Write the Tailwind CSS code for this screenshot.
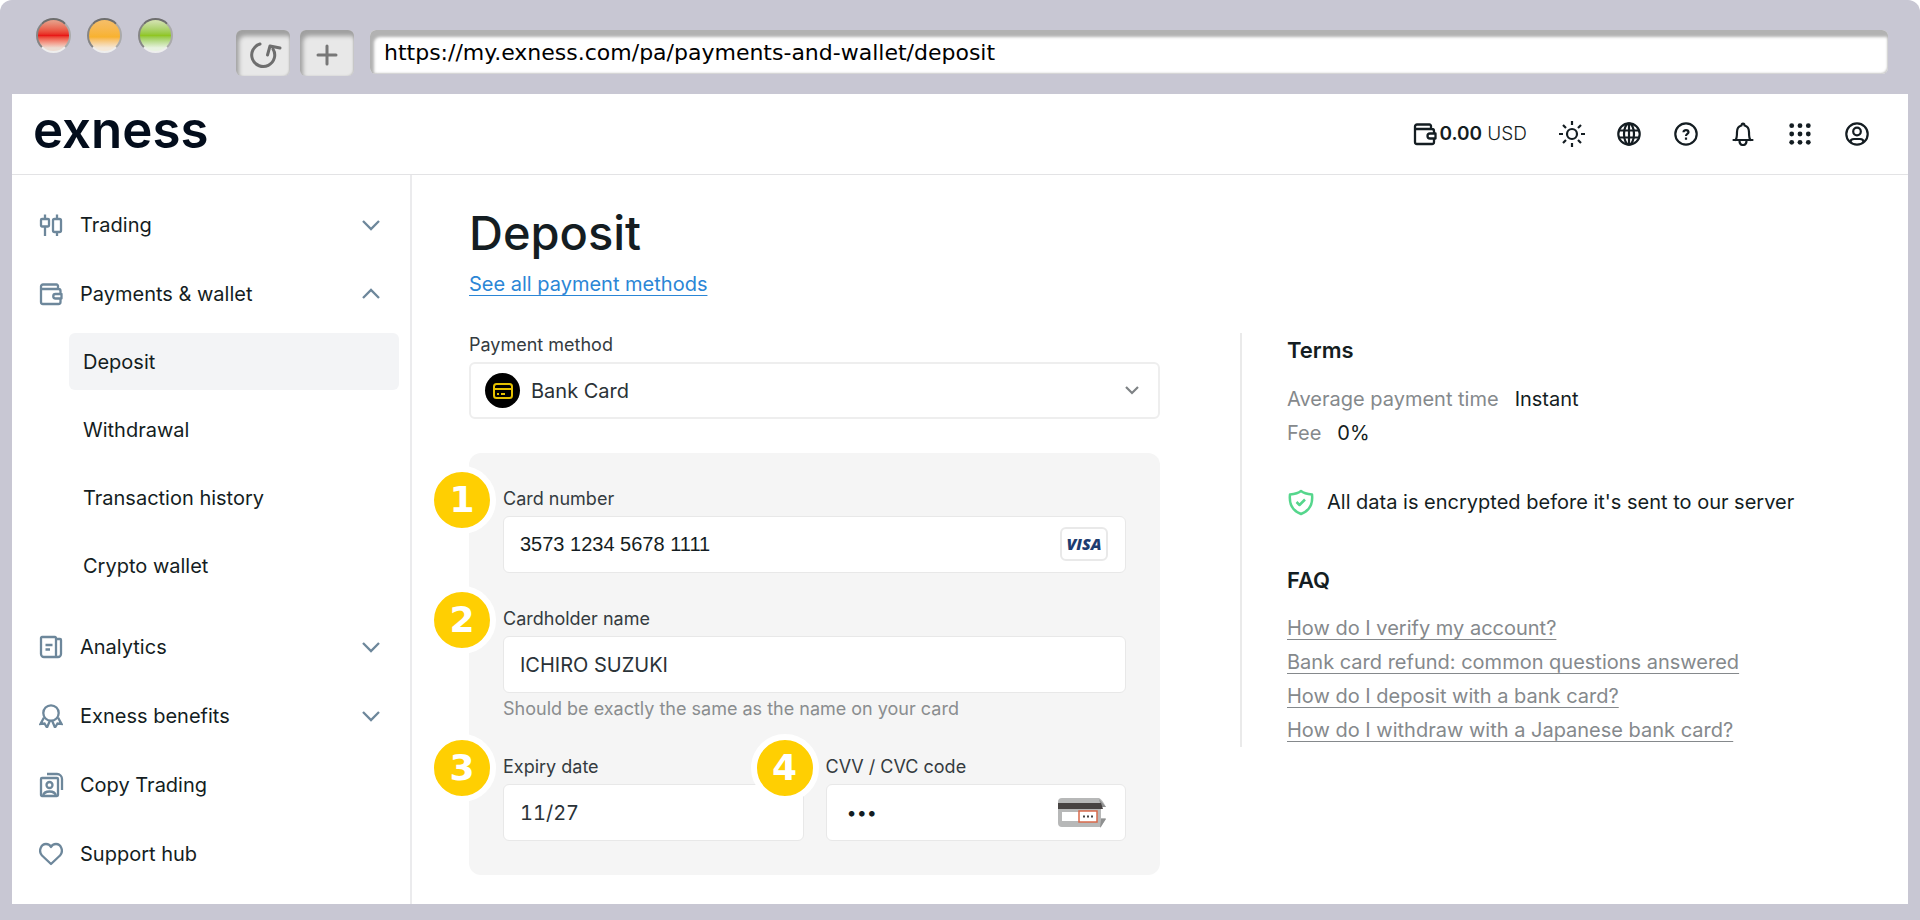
<!DOCTYPE html>
<html lang="en">
<head>
  <meta charset="UTF-8">
  <meta name="viewport" content="width=device-width, initial-scale=1.0">
  <title>Exness - Deposit</title>
  <script src="https://cdn.jsdelivr.net/npm/@tailwindcss/browser@4"></script>
</head>
<body class="bg-white font-['Inter',sans-serif] text-[#141d22]">
  <div class="flex min-h-screen flex-col rounded-t-xl bg-[#c8c7d3]">

    <!-- browser bar -->
    <div class="flex h-[94px] shrink-0 items-start pl-9 pr-8">
      <div class="mt-[18px] flex gap-4">
        <span class="size-[35px] rounded-full border-2 border-t-[#6e6e6e] border-l-[#858585] border-r-[#aaa] border-b-[#eee] bg-linear-to-b from-[#e69a84] from-5% via-[#e81818] via-50% to-[#ecdcd2] to-90%"></span>
        <span class="size-[35px] rounded-full border-2 border-t-[#6e6e6e] border-l-[#858585] border-r-[#aaa] border-b-[#eee] bg-linear-to-b from-[#f6bd64] from-5% via-[#f8b22e] via-55% to-[#f4e8d8] to-90%"></span>
        <span class="size-[35px] rounded-full border-2 border-t-[#6e6e6e] border-l-[#858585] border-r-[#aaa] border-b-[#eee] bg-linear-to-b from-[#cfe0a8] from-5% via-[#90c622] via-50% to-[#e8f2e0] to-90%"></span>
      </div>
      <div class="ml-[63px] mt-[30px] flex gap-[10px]">
        <button aria-label="Reload" class="flex h-[46px] w-[54px] items-center justify-center rounded-md bg-[#e8e8e8] pt-1 shadow-[inset_3px_6px_4px_#a0a0a0,inset_-1px_0_2px_#c0c0c0]">
          <svg class="h-7 w-8 overflow-visible" viewBox="0 0 32 28" fill="none" stroke="#6e6e6e" stroke-width="3" stroke-linecap="round" stroke-linejoin="round"><path d="M13 3A11.500 11.500 0 1 0 26 8"/><path d="M20.500 14L23 5l10 2"/></svg>
        </button>
        <button aria-label="New tab" class="flex h-[46px] w-[54px] items-center justify-center rounded-md bg-[#e8e8e8] pt-1 shadow-[inset_3px_6px_4px_#a0a0a0,inset_-1px_0_2px_#c0c0c0]">
          <svg class="size-[22px]" viewBox="0 0 22 22" fill="none" stroke="#777" stroke-width="3" stroke-linecap="round"><path d="M11 2v18M2 11h18"/></svg>
        </button>
      </div>
      <input type="text" aria-label="Address" value="https://my.exness.com/pa/payments-and-wallet/deposit" class="ml-4 mt-[30px] h-11 min-w-0 flex-1 rounded-md bg-white pl-[14px] font-['DejaVu_Sans',sans-serif] text-[22px] text-black shadow-[inset_4px_7px_3px_#b2b2b2,inset_-1px_-1px_2px_#c8c8c8]">
    </div>

    <!-- page -->
    <div class="mx-3 mb-4 flex flex-1 flex-col bg-white">
      <header class="flex h-[81px] items-center justify-between border-b border-[#e3e3e5] pl-[21px] pr-[39px]">
        <a href="#" class="pb-2 text-[51px] leading-[60px] font-semibold text-[#030d1c]">exness</a>
        <div class="flex items-center gap-[33px]">
          <a href="#" class="flex items-center gap-0.5 text-[19px]">
            <svg class="size-6" viewBox="0 0 24 24" fill="none" stroke="currentColor" stroke-width="2.300" stroke-linejoin="round"><path d="M18 7V4a1.500 1.500 0 0 0-1.500-1.500H4A2 2 0 0 0 2 4.500V20a2 2 0 0 0 2 2h15a2 2 0 0 0 2-2v-3M2 7h17a2 2 0 0 1 2 2v2.500M22.500 11.500H17a2.500 2.500 0 0 0 0 5h5.500z"/></svg>
            <span><b class="font-semibold">0.00</b> <span class="font-light">USD</span></span>
          </a>
          <button aria-label="Theme">
            <svg class="size-6 overflow-visible" viewBox="0 0 24 24" fill="none" stroke="currentColor" stroke-width="2.200"><circle cx="12" cy="12" r="5"/><path d="M12-1v4M12 21v4M-1 12h4M21 12h4M3 3l3 3M18 18l3 3M3 21l3-3M18 6l3-3"/></svg>
          </button>
          <button aria-label="Language">
            <svg class="size-6" viewBox="0 0 24 24" fill="none" stroke="currentColor" stroke-width="2.200"><circle cx="12" cy="12" r="10.700"/><ellipse cx="12" cy="12" rx="5" ry="10.700"/><path d="M2 8.500h20M2 15.500h20M12 1v22"/></svg>
          </button>
          <button aria-label="Help">
            <svg class="size-6" viewBox="0 0 24 24" fill="none" stroke="currentColor" stroke-width="2.200"><circle cx="12" cy="12" r="10.700"/><path d="M9.500 10.300c0-3 5-3 5 0 0 1.700-2.500 1.700-2.500 3.700M12 15.500v2.300"/></svg>
          </button>
          <button aria-label="Notifications">
            <svg class="size-6" viewBox="0 0 24 24" fill="none" stroke="currentColor" stroke-width="2.200" stroke-linecap="round" stroke-linejoin="round"><path d="M2.500 18h19M4.500 18c1.500-1.500 1.500-3 1.500-8 0-4 2.500-6 4.500-6.500C10.500 1 13.500 1 13.500 3.500 15.500 4 18 6 18 10c0 5 0 6.500 1.500 8M8.500 18.500c0 6 7 6 7 0"/></svg>
          </button>
          <button aria-label="Apps">
            <svg class="size-6" viewBox="0 0 24 24" fill="currentColor"><circle cx="3.700" cy="3.700" r="2.400"/><circle cx="12" cy="3.700" r="2.400"/><circle cx="20.300" cy="3.700" r="2.400"/><circle cx="3.700" cy="12" r="2.400"/><circle cx="12" cy="12" r="2.400"/><circle cx="20.300" cy="12" r="2.400"/><circle cx="3.700" cy="20.300" r="2.400"/><circle cx="12" cy="20.300" r="2.400"/><circle cx="20.300" cy="20.300" r="2.400"/></svg>
          </button>
          <button aria-label="Account">
            <svg class="size-6" viewBox="0 0 24 24" fill="none" stroke="currentColor" stroke-width="2.200"><circle cx="12" cy="12" r="10.700"/><circle cx="12" cy="9.500" r="3.800"/><path d="M5.500 20c0-2 1.500-3 3.500-3h6c2 0 3.500 1 3.500 3"/></svg>
          </button>
        </div>
      </header>

      <div class="flex flex-1">
        <!-- sidebar -->
        <nav class="flex w-[400px] shrink-0 flex-col gap-3 border-r-2 border-[#ebebed] pt-[21px] pr-[11px] text-[20px]">
          <button class="flex h-[57px] items-center gap-[17px] pl-[27px] pr-4">
            <svg class="size-6 text-[#6d879b]" viewBox="0 0 24 24" fill="none" stroke="currentColor" stroke-width="2.300"><rect x="2" y="6" width="8" height="7.500" rx="1"/><path d="M6 1.500V6M6 13.500V23M18 1.500V6M18 19v4"/><rect x="14" y="6" width="8" height="13" rx="1.500"/></svg>
            <span>Trading</span>
            <svg class="ml-auto size-6 text-[#6d879b]" viewBox="0 0 24 24" fill="none" stroke="currentColor" stroke-width="2.300"><path d="M4 8l8 8 8-8"/></svg>
          </button>
          <div>
            <button class="flex h-[57px] w-full items-center gap-[17px] pl-[27px] pr-4">
              <svg class="size-6 text-[#6d879b]" viewBox="0 0 24 24" fill="none" stroke="currentColor" stroke-width="2.300" stroke-linejoin="round"><path d="M19 7V4a1.500 1.500 0 0 0-1.500-1.500H4A2 2 0 0 0 2 4.500V20a2 2 0 0 0 2 2h15.500a2 2 0 0 0 2-2v-3M2 7h17.500a2 2 0 0 1 2 2v3M22.500 12h-6a2 2 0 0 0 0 4.500h6z"/></svg>
              <span>Payments &amp; wallet</span>
              <svg class="ml-auto size-6 text-[#6d879b]" viewBox="0 0 24 24" fill="none" stroke="currentColor" stroke-width="2.300"><path d="M4 16l8-8 8 8"/></svg>
            </button>
            <div class="mt-[11px] mb-3 ml-[57px] flex flex-col gap-[11px]">
              <a href="#" class="flex h-[57px] items-center rounded-md bg-[#f3f4f6] pl-[14px]">Deposit</a>
              <a href="#" class="flex h-[57px] items-center pl-[14px]">Withdrawal</a>
              <a href="#" class="flex h-[57px] items-center pl-[14px]">Transaction history</a>
              <a href="#" class="flex h-[57px] items-center pl-[14px]">Crypto wallet</a>
            </div>
          </div>
          <button class="flex h-[57px] items-center gap-[17px] pl-[27px] pr-4">
            <svg class="size-6 text-[#6d879b]" viewBox="0 0 24 24" fill="none" stroke="currentColor" stroke-width="2.300" stroke-linejoin="round"><path d="M17 22V3a1 1 0 0 0-1-1H3a1 1 0 0 0-1 1v16a3 3 0 0 0 3 3h14a3 3 0 0 0 3-3V5a1 1 0 0 0-1-1h-4M6.500 10h7M6.500 14.500h4.500"/></svg>
            <span>Analytics</span>
            <svg class="ml-auto size-6 text-[#6d879b]" viewBox="0 0 24 24" fill="none" stroke="currentColor" stroke-width="2.300"><path d="M4 8l8 8 8-8"/></svg>
          </button>
          <button class="flex h-[57px] items-center gap-[17px] pl-[27px] pr-4">
            <svg class="size-6 text-[#6d879b]" viewBox="0 0 24 24" fill="none" stroke="currentColor" stroke-width="2.300"><circle cx="12" cy="9" r="7.700"/><path d="M5 13.500L1.500 20l4-.5L8 23.500l3-7M19 13.500l3.500 6.500-4-.5-2.500 4-3-7"/></svg>
            <span>Exness benefits</span>
            <svg class="ml-auto size-6 text-[#6d879b]" viewBox="0 0 24 24" fill="none" stroke="currentColor" stroke-width="2.300"><path d="M4 8l8 8 8-8"/></svg>
          </button>
          <a href="#" class="flex h-[57px] items-center gap-[17px] pl-[27px]">
            <svg class="size-6 overflow-visible text-[#6d879b]" viewBox="0 0 24 24" fill="none" stroke="currentColor" stroke-width="2.300"><rect x="2" y="5" width="17" height="18" rx="1"/><circle cx="10.500" cy="12" r="3"/><path d="M4 23c1-6 12-6 13 0M8 1h10a5 5 0 0 1 5 5v11"/></svg>
            <span>Copy Trading</span>
          </a>
          <a href="#" class="flex h-[57px] items-center gap-[17px] pl-[27px]">
            <svg class="size-6" viewBox="0 0 24 24" fill="none" stroke="#6d879b" stroke-width="2.300" stroke-linejoin="round"><path d="M12 22L3 13.500C-1 9 2 2 7 2c2.500 0 4 1 5 3 1-2 2.500-3 5-3 5 0 8 7 4 11.500z"/></svg>
            <span>Support hub</span>
          </a>
        </nav>

        <main class="flex-1 pt-[30px] pl-[57px]">
          <h1 class="text-[47px] leading-[56px] font-medium">Deposit</h1>
          <a href="#" class="mt-2 block w-fit text-[20px] leading-[30px] text-[#2b86d6] underline decoration-1 underline-offset-4">See all payment methods</a>

          <div class="mt-[34px] grid grid-cols-[691fr_668fr] gap-20">
            <form>
              <label for="method" class="block text-[18px] leading-6 text-[#343b40]">Payment method</label>
              <div class="relative mt-[5px]">
                <select id="method" class="h-[57px] w-full appearance-none rounded-md border-2 border-[#eeeeee] bg-white pl-[60px] text-[20px] text-[#2a3237]">
                  <option>Bank Card</option>
                </select>
                <span class="pointer-events-none absolute top-[11px] left-4 flex size-[35px] items-center justify-center rounded-full bg-black">
                  <svg class="h-4 w-5" viewBox="0 0 20 16" fill="none" stroke="#e5c100" stroke-width="2"><rect x="1" y="1" width="18" height="14" rx="2.500"/><path d="M1 6h18M4 11h2M8 11h4"/></svg>
                </span>
                <svg class="pointer-events-none absolute top-5 right-5 size-4 text-[#7e8285]" viewBox="0 0 16 16" fill="none" stroke="currentColor" stroke-width="2.200"><path d="M2 5l6 6 6-6"/></svg>
              </div>

              <div class="mt-[34px] flex flex-col gap-[34px] rounded-xl bg-[#f5f5f5] p-[34px]">
                <div class="relative">
                  <span class="absolute -top-[21px] -left-[75px] flex size-[68px] items-center justify-center rounded-full border-6 border-white bg-[#ffcf02] font-['DejaVu_Sans',sans-serif] text-[36px] font-bold text-white">1</span>
                  <label for="number" class="block text-[18px] leading-6 text-[#343b40]">Card number</label>
                  <input id="number" type="text" value="3573 1234 5678 1111" class="mt-[5px] h-[57px] w-full rounded-md border border-[#e8e8e8] bg-white px-4 font-['Liberation_Sans',sans-serif] text-[20px]">
                  <span class="absolute right-[18px] bottom-3 flex h-[34px] w-12 items-center justify-center rounded-md border-2 border-[#e9e9e9] bg-white font-['Open_Sans',sans-serif] text-[16px] font-extrabold text-[#1d3c70] italic">VISA</span>
                </div>
                <div>
                  <div class="relative">
                    <span class="absolute -top-[21px] -left-[75px] flex size-[68px] items-center justify-center rounded-full border-6 border-white bg-[#ffcf02] font-['DejaVu_Sans',sans-serif] text-[36px] font-bold text-white">2</span>
                    <label for="holder" class="block text-[18px] leading-6 text-[#343b40]">Cardholder name</label>
                    <input id="holder" type="text" value="ICHIRO SUZUKI" class="mt-[5px] h-[57px] w-full rounded-md border border-[#e8e8e8] bg-white px-4 text-[20px] text-[#2a3237]">
                  </div>
                  <p class="mt-1 text-[18px] leading-6 text-[#8a8d8f]">Should be exactly the same as the name on your card</p>
                </div>
                <div class="grid grid-cols-2 gap-[22px]">
                  <div class="relative">
                    <span class="absolute -top-[21px] -left-[75px] flex size-[68px] items-center justify-center rounded-full border-6 border-white bg-[#ffcf02] font-['DejaVu_Sans',sans-serif] text-[36px] font-bold text-white">3</span>
                    <label for="expiry" class="block text-[18px] leading-6 text-[#343b40]">Expiry date</label>
                    <input id="expiry" type="text" value="11/27" class="mt-[5px] h-[57px] w-full rounded-md border border-[#e8e8e8] bg-white px-4 text-[20px] text-[#2a3237] tabular-nums">
                  </div>
                  <div class="relative">
                    <span class="absolute -top-[21px] -left-[75px] flex size-[68px] items-center justify-center rounded-full border-6 border-white bg-[#ffcf02] font-['DejaVu_Sans',sans-serif] text-[36px] font-bold text-white">4</span>
                    <label for="cvv" class="block text-[18px] leading-6 text-[#343b40]">CVV / CVC code</label>
                    <input id="cvv" type="password" value="123" class="mt-[5px] h-[57px] w-full rounded-md border border-[#e8e8e8] bg-white px-5 text-[18px]">
                    <svg class="absolute right-5 bottom-3 h-8 w-12" viewBox="0 0 48 32">
                      <path d="M4 1h37q3 1 7 9h-5v11h5l-5 9H4q-4 0-4-4V5q0-4 4-4z" fill="#b7b8b8"/>
                      <path d="M41 2l7 8h-5zM43 22h5l-6 9z" fill="#8f9090"/>
                      <path d="M0 6h43l2 6H0z" fill="#474342"/>
                      <path d="M4 15h17v9H4z" fill="#fff"/>
                      <path d="M21 14h18v11H21z" fill="#fff" stroke="#d9694b" stroke-width="1.500"/>
                      <path d="M25 19.500h2M29 19.500h2M33 19.500h2" stroke="#444" stroke-width="2"/>
                    </svg>
                  </div>
                </div>
              </div>
            </form>

            <aside class="self-start border-l-2 border-[#eaeaea] pl-[45px] text-[20px] leading-[34px]">
              <h2 class="text-[22px] font-semibold">Terms</h2>
              <dl class="mt-[15px]">
                <div class="flex gap-4"><dt class="text-[#85898c]">Average payment time</dt><dd>Instant</dd></div>
                <div class="flex gap-4"><dt class="text-[#85898c]">Fee</dt><dd>0%</dd></div>
              </dl>
              <p class="mt-[35px] flex items-center gap-3">
                <svg class="size-7" viewBox="0 0 28 28" fill="none" stroke="#55d68c" stroke-width="2.500" stroke-linejoin="round"><path d="M14 3c3 2.500 6 3 11 3.500 1 9-2 16-11 19.500C5 22.500 2 15.500 3 6.500c5-.5 8-1 11-3.500z"/><path d="M9.500 14l3 3 5.500-5.500"/></svg>
                All data is encrypted before it's sent to our server
              </p>
              <h2 class="mt-[44px] text-[22px] font-semibold">FAQ</h2>
              <ul class="mt-[14px] text-[#85898c] underline decoration-1 underline-offset-4">
                <li><a href="#">How do I verify my account?</a></li>
                <li><a href="#">Bank card refund: common questions answered</a></li>
                <li><a href="#">How do I deposit with a bank card?</a></li>
                <li><a href="#">How do I withdraw with a Japanese bank card?</a></li>
              </ul>
            </aside>
          </div>
        </main>
      </div>
    </div>
  </div>
</body>
</html>
